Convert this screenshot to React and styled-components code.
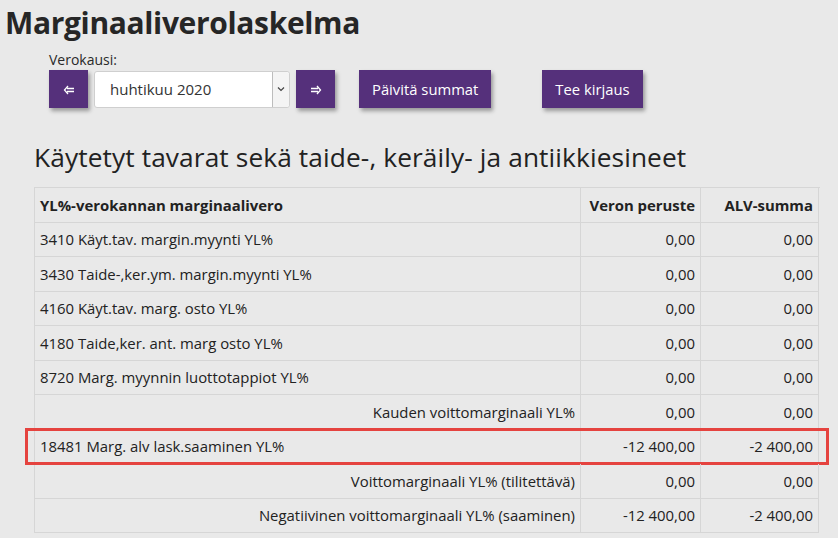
import React from 'react'
import styled, { createGlobalStyle } from 'styled-components'

const GlobalStyle = createGlobalStyle`
  html, body {
    margin: 0;
    padding: 0;
    background: #e9e9e9;
  }
  body {
    font-family: "Open Sans", "Noto Sans", Arial, sans-serif;
    color: #222;
    overflow: hidden;
  }
`

const Page = styled.div`
  width: 838px;
  height: 538px;
  padding: 0 0 0 5px;
  box-sizing: border-box;
`

const Title = styled.h1`
  margin: 0;
  padding-top: 3px;
  font-size: 30px;
  line-height: 40px;
  font-weight: 700;
  color: #262626;
  letter-spacing: -0.35px;
`

const Controls = styled.div`
  margin: 9px 0 0 44px;
`

const Label = styled.div`
  font-size: 14px;
  line-height: 16px;
  color: #2a2a2a;
  margin-bottom: 2px;
`

const Toolbar = styled.div`
  display: flex;
  align-items: center;
  gap: 6px;
`

const Button = styled.button`
  height: 38px;
  min-width: ${p => (p.$arrow ? '39px' : 'auto')};
  padding: ${p => (p.$arrow ? '0' : '0 13px')};
  margin-left: ${p => p.$gap || 0}px;
  border: none;
  background: #55307b;
  color: #fff;
  font-family: inherit;
  font-size: 14.8px;
  box-shadow: 2px 3px 4px rgba(0, 0, 0, 0.35);
  cursor: pointer;
`

const Select = styled.div`
  width: 196px;
  height: 37px;
  background: #fff;
  border: 1px solid #cfcfcf;
  border-radius: 3px;
  display: flex;
  align-items: center;
  box-sizing: border-box;
`

const SelectText = styled.span`
  flex: 1;
  padding-left: 15px;
  font-size: 15px;
  color: #333;
`

const SelectArrow = styled.span`
  width: 16px;
  height: 35px;
  border-left: 1px solid #bdbdbd;
  display: flex;
  align-items: center;
  justify-content: center;
  background: #f4f4f4;
  border-radius: 0 3px 3px 0;
`

const Subtitle = styled.h2`
  margin: 33px 0 0 29px;
  font-size: 26.3px;
  line-height: 33px;
  font-weight: 400;
  color: #222;
  letter-spacing: 0.1px;
`

const Table = styled.div`
  margin: 13px 0 0 29px;
  width: 785px;
  border-top: 1px solid #d6d6d6;
  border-left: 1px solid #d6d6d6;
`

const Row = styled.div`
  display: grid;
  grid-template-columns: 546px 120px 118px;
  height: 34.5px;
  position: relative;
  font-weight: ${p => (p.$head ? 700 : 400)};

  ${p =>
    p.$highlight &&
    `
    &::after {
      content: '';
      position: absolute;
      left: -10px;
      right: -9px;
      top: -2px;
      bottom: -1px;
      border: 3px solid #e5433f;
      pointer-events: none;
    }
  `}
`

const Cell = styled.div`
  border-right: 1px solid #d6d6d6;
  border-bottom: 1px solid #d6d6d6;
  padding: 0 5px;
  display: flex;
  align-items: center;
  justify-content: ${p => (p.$right ? 'flex-end' : 'flex-start')};
  font-size: 14.9px;
  color: #222;
  white-space: nowrap;
  overflow: hidden;
`

const Arrow = ({ dir }) => (
  <svg width="12" height="10" viewBox="0 0 12 10">
    {dir === 'left' ? (
      <path d="M11 3.5H4M11 6.5H4M5 1L1.5 5L5 9" stroke="#fff" strokeWidth="1.3" fill="none" />
    ) : (
      <path d="M1 3.5H8M1 6.5H8M7 1L10.5 5L7 9" stroke="#fff" strokeWidth="1.3" fill="none" />
    )}
  </svg>
)

const rows = [
  ['3410 Käyt.tav. margin.myynti YL%', '0,00', '0,00'],
  ['3430 Taide-,ker.ym. margin.myynti YL%', '0,00', '0,00'],
  ['4160 Käyt.tav. marg. osto YL%', '0,00', '0,00'],
  ['4180 Taide,ker. ant. marg osto YL%', '0,00', '0,00'],
  ['8720 Marg. myynnin luottotappiot YL%', '0,00', '0,00'],
  ['Kauden voittomarginaali YL%', '0,00', '0,00', true],
  ['18481 Marg. alv lask.saaminen YL%', '-12 400,00', '-2 400,00', false, true],
  ['Voittomarginaali YL% (tilitettävä)', '0,00', '0,00', true],
  ['Negatiivinen voittomarginaali YL% (saaminen)', '-12 400,00', '-2 400,00', true],
]

export default function App() {
  return (
    <Page>
      <GlobalStyle />
      <Title>Marginaaliverolaskelma</Title>
      <Controls>
        <Label>Verokausi:</Label>
        <Toolbar>
          <Button $arrow><Arrow dir="left" /></Button>
          <Select>
            <SelectText>huhtikuu 2020</SelectText>
            <SelectArrow>
              <svg width="8" height="6" viewBox="0 0 8 6">
                <path d="M1 1.5L4 4.5L7 1.5" stroke="#444" strokeWidth="1.2" fill="none" />
              </svg>
            </SelectArrow>
          </Select>
          <Button $arrow><Arrow dir="right" /></Button>
          <Button $gap={18}>Päivitä summat</Button>
          <Button $gap={45}>Tee kirjaus</Button>
        </Toolbar>
      </Controls>
      <Subtitle>Käytetyt tavarat sekä taide-, keräily- ja antiikkiesineet</Subtitle>
      <Table>
        <Row $head>
          <Cell>YL%-verokannan marginaalivero</Cell>
          <Cell $right>Veron peruste</Cell>
          <Cell $right>ALV-summa</Cell>
        </Row>
        {rows.map(([name, base, vat, sum, hl]) => (
          <Row key={name} $highlight={hl}>
            <Cell $right={sum}>{name}</Cell>
            <Cell $right>{base}</Cell>
            <Cell $right>{vat}</Cell>
          </Row>
        ))}
      </Table>
    </Page>
  )
}
